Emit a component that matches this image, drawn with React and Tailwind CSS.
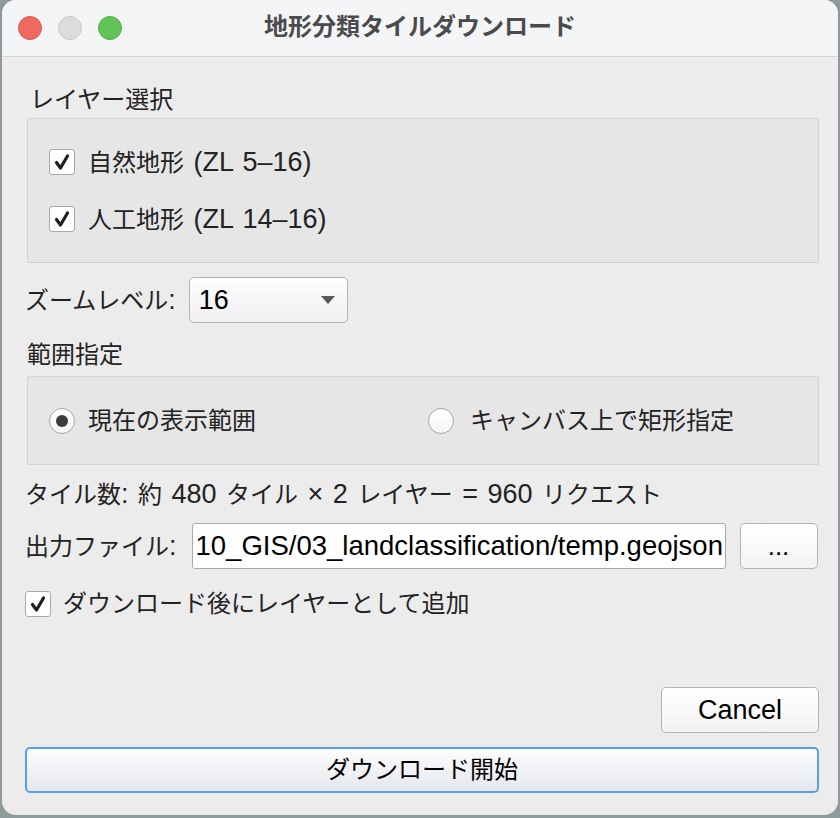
import React from "react";

const FONT = { fontFamily: '"Liberation Sans", "Noto Sans CJK JP", sans-serif' };

const CJK = /([\u3000-\u30ff\u3400-\u9fff\uff00-\uffef]+)/;

function T({ children, latin = "text-[27px]" }) {
  const parts = String(children).split(CJK).filter((p) => p !== "");
  return (
    <span className="whitespace-pre leading-[30px] [word-spacing:2px]">
      {parts.map((p, i) =>
        CJK.test(p) ? (
          <span key={i} className="text-[24px]">{p}</span>
        ) : (
          <span key={i} className={latin}>{p}</span>
        )
      )}
    </span>
  );
}

function Check() {
  return (
    <div className="w-[26px] h-[26px] shrink-0 rounded-[3px] border border-[#a9a9a9] bg-white flex items-center justify-center">
      <svg width="18" height="18" viewBox="0 0 18 18">
        <path d="M3.5 9.5 L7.5 15 L14.5 3" fill="none" stroke="#1e1e1e" strokeWidth="3.2" strokeLinecap="round" strokeLinejoin="round" />
      </svg>
    </div>
  );
}

function Radio({ on }) {
  return (
    <div className="w-[26px] h-[26px] shrink-0 rounded-full border border-[#a6a6a6] bg-gradient-to-b from-white to-[#f6f6f6] flex items-center justify-center">
      {on && <div className="w-[12px] h-[12px] rounded-full bg-[#3c3c3c]" />}
    </div>
  );
}

export default function App() {
  return (
    <div className="w-[840px] h-[818px] bg-[#8d9c9a] overflow-hidden" style={FONT}>
      <div className="ml-[2px] w-[836px] h-[815px] rounded-[14px] overflow-hidden bg-[#ececec] flex flex-col">
        {/* title bar */}
        <div className="h-[57px] shrink-0 bg-[#f4f5f6] border-b border-[#d3d3d3] grid grid-cols-[1fr_auto_1fr] items-center">
          <div className="flex items-center gap-[16px] pl-[16px]">
            <div className="w-[24px] h-[24px] rounded-full bg-[#ee6a5f] border border-[#d95a4f]" />
            <div className="w-[24px] h-[24px] rounded-full bg-[#dcdcdc] border border-[#c9c9c9]" />
            <div className="w-[24px] h-[24px] rounded-full bg-[#61c454] border border-[#54ad46]" />
          </div>
          <div className="text-[24px] font-bold text-[#4b4b4b] leading-[30px] mb-[2px]">地形分類タイルダウンロード</div>
          <div />
        </div>

        {/* content */}
        <div className="flex-1 flex flex-col pl-[23px] pr-[19px] pb-[22px] text-[24px] text-[#232323]">
          <div className="mt-[28px] ml-[5px] h-[30px] leading-[30px]">レイヤー選択</div>

          <div className="mt-[3px] ml-[2px] h-[145px] border border-[#d3d3d3] bg-[#e6e6e6] rounded-[2px] pl-[21px] pt-[28px] flex flex-col gap-[27px]">
            <div className="h-[30px] flex items-center gap-[13px]">
              <Check />
              <T>自然地形 (ZL 5–16)</T>
            </div>
            <div className="h-[30px] flex items-center gap-[13px]">
              <Check />
              <T>人工地形 (ZL 14–16)</T>
            </div>
          </div>

          <div className="mt-[14px] h-[46px] flex items-center">
            <T>ズームレベル:</T>
            <div className="ml-[13px] w-[159px] h-[46px] rounded-[5px] border border-[#b3b3b3] bg-gradient-to-b from-[#fdfdfd] to-[#f1f1f1] flex items-center justify-between pl-[9px] pr-[12px] text-black">
              <span className="text-[27px] leading-[30px]">16</span>
              <svg width="14" height="8" viewBox="0 0 14 8">
                <path d="M0 0 H14 L7 8 Z" fill="#585858" />
              </svg>
            </div>
          </div>

          <div className="mt-[17px] ml-[2px] h-[30px] leading-[30px]">範囲指定</div>

          <div className="mt-[6px] ml-[2px] h-[89px] border border-[#d3d3d3] bg-[#e6e6e6] rounded-[2px] pl-[21px] flex items-center">
            <div className="w-[379px] flex items-center gap-[13px]">
              <Radio on />
              <span className="leading-[30px]">現在の表示範囲</span>
            </div>
            <div className="flex items-center gap-[16px]">
              <Radio />
              <span className="leading-[30px]">キャンバス上で矩形指定</span>
            </div>
          </div>

          <div className="mt-[14px] h-[30px] flex items-center whitespace-nowrap">
            <T>タイル数: 約 480 タイル × 2 レイヤー = 960 リクエスト</T>
          </div>

          <div className="mt-[14px] h-[46px] flex items-center">
            <T>出力ファイル:</T>
            <div className="ml-[15px] w-[534px] h-[46px] border border-[#a9a9a9] rounded-[3px] bg-white flex items-center justify-start overflow-hidden pl-[3px] text-black">
              <span className="whitespace-nowrap text-[27.5px] leading-[30px]">10_GIS/03_landclassification/temp.geojson</span>
            </div>
            <div className="ml-[14px] w-[78px] h-[46px] rounded-[5px] border border-[#b3b3b3] bg-gradient-to-b from-white to-[#f3f3f3] flex items-center justify-center text-black">
              <span className="text-[26px] leading-[30px]">...</span>
            </div>
          </div>

          <div className="mt-[20px] h-[30px] flex items-center gap-[12px]">
            <Check />
            <span className="leading-[30px]">ダウンロード後にレイヤーとして追加</span>
          </div>

          <div className="mt-[68px] flex justify-end">
            <div className="w-[158px] h-[46px] rounded-[5px] border border-[#b3b3b3] bg-gradient-to-b from-white to-[#f3f3f3] flex items-center justify-center text-black">
              <span className="text-[27px] leading-[30px]">Cancel</span>
            </div>
          </div>

          <div className="mt-[14px] h-[46px] rounded-[5px] border-2 border-[#5b9ee9] bg-gradient-to-b from-[#fdfdfd] to-[#e4e7ed] flex items-center justify-center text-black">
            ダウンロード開始
          </div>
        </div>
      </div>
    </div>
  );
}
